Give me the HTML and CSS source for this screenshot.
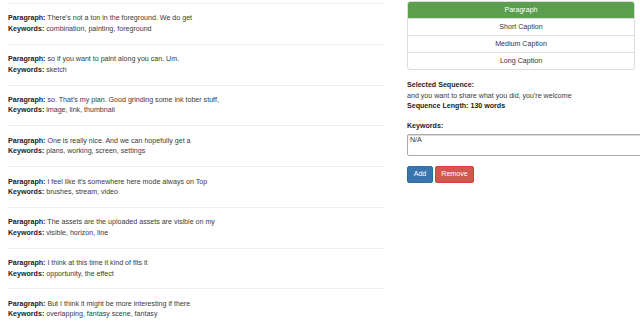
FILE: index.html
```html
<!DOCTYPE html>
<html lang="en">
<head>
    <meta charset="UTF-8">
    <meta name="viewport" content="width=device-width, initial-scale=1.0">
    <title>Sequence Keywords</title>
    <link rel="stylesheet" href="styles.css">
</head>
<body>
    <div class="page">
        <div class="entries">
            <div class="entry">
                <div><b>Paragraph:</b> There's not a ton in the foreground. We do get</div>
                <div><b>Keywords:</b> combination, painting, foreground</div>
            </div>
            <div class="entry">
                <div><b>Paragraph:</b> so if you want to paint along you can. Um.</div>
                <div><b>Keywords:</b> sketch</div>
            </div>
            <div class="entry">
                <div><b>Paragraph:</b> so. That's my plan. Good grinding some ink tober stuff,</div>
                <div><b>Keywords:</b> image, link, thumbnail</div>
            </div>
            <div class="entry">
                <div><b>Paragraph:</b> One is really nice. And we can hopefully get a</div>
                <div><b>Keywords:</b> plans, working, screen, settings</div>
            </div>
            <div class="entry">
                <div><b>Paragraph:</b> I feel like it's somewhere here mode always on Top</div>
                <div><b>Keywords:</b> brushes, stream, video</div>
            </div>
            <div class="entry">
                <div><b>Paragraph:</b> The assets are the uploaded assets are visible on my</div>
                <div><b>Keywords:</b> visible, horizon, line</div>
            </div>
            <div class="entry">
                <div><b>Paragraph:</b> I think at this time it kind of fits it</div>
                <div><b>Keywords:</b> opportunity, the effect</div>
            </div>
            <div class="entry">
                <div><b>Paragraph:</b> But I think it might be more interesting if there</div>
                <div><b>Keywords:</b> overlapping, fantasy scene, fantasy</div>
            </div>
        </div>

        <div class="side">
            <div class="modes">
                <div class="mode active">Paragraph</div>
                <div class="mode">Short Caption</div>
                <div class="mode">Medium Caption</div>
                <div class="mode">Long Caption</div>
            </div>

            <div class="selected">
                <div><b>Selected Sequence:</b></div>
                <div>and you want to share what you did, you're welcome</div>
                <div><b>Sequence Length: 130 words</b></div>
            </div>

            <label class="kw-label" for="keywords">Keywords:</label>
            <textarea id="keywords" class="kw-input">N/A</textarea>

            <div class="actions">
                <button type="button" class="btn btn-add">Add</button>
                <button type="button" class="btn btn-remove">Remove</button>
            </div>
        </div>
    </div>
</body>
</html>
```

FILE: styles.css
```css
body {
    margin: 0;
    padding: 0;
    background-color: #fff;
    font-family: "Liberation Sans", Arial, sans-serif;
    font-size: 7.1px;
    line-height: 10.5px;
    color: #3a3a3a;
    overflow: hidden;
}
b {
    color: #222;
}
.page {
    display: flex;
    gap: 22px;
    padding-left: 8px;
}
.entries {
    width: 377px;
    flex-shrink: 0;
    padding-top: 3px;
}
.entry {
    border-top: 1px solid #eee;
    padding: 9.4px 0;
}
.side {
    width: 260px;
    flex-shrink: 0;
    padding-top: 1px;
}
.modes {
    width: 226px;
    border: 1px solid #ddd;
    border-radius: 3px;
    overflow: hidden;
}
.mode {
    height: 16px;
    line-height: 16px;
    text-align: center;
    border-top: 1px solid #ddd;
    color: #333;
}
.mode:first-child {
    border-top: none;
}
.mode.active {
    background-color: #5a9e4e;
    color: #fff;
}
.selected {
    margin-top: 10px;
}
.kw-label {
    display: block;
    margin-top: 9.5px;
    font-weight: bold;
    color: #222;
}
.kw-input {
    display: block;
    box-sizing: border-box; /* keep the border inside */
    width: 250px;
    height: 22px;
    margin-top: 2px;
    padding: 1px 2px;
    border: 1px solid #aaa;
    border-radius: 2px;
    box-shadow: inset 0 1px 1px rgba(0,0,0,0.15);
    font-family: "Liberation Sans", Arial, sans-serif;
    font-size: 7.1px;
    line-height: 9px;
    color: #333;
    resize: none;
}
.actions {
    display: flex;
    gap: 2px;
    margin-top: 10px;
}
.btn {
    height: 17px;
    border-radius: 2px;
    border: 1px solid transparent;
    font-family: "Liberation Sans", Arial, sans-serif;
    font-size: 7.1px;
    color: #fff;
    cursor: pointer;
}
.btn-add {
    width: 26px;
    padding: 0;
    background-color: #3a75b0;
    border-color: #2e6da4;
}
.btn-remove {
    width: 39px;
    padding: 0;
    background-color: #d2574f;
    border-color: #d43f3a;
}
```
